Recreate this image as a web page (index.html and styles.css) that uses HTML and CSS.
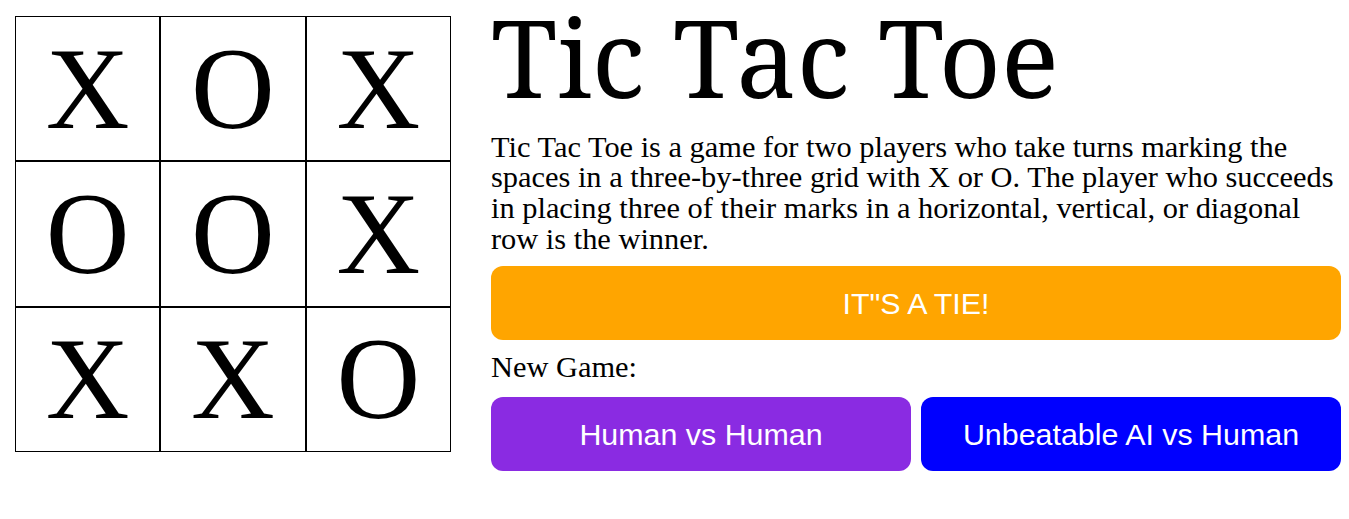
FILE: index.html
```html
<!DOCTYPE html>
<html>
<head>
<meta charset="utf-8">
<link rel="stylesheet" href="styles.css">
</head>
<body>
<div class="page">
  <div class="board">
    <div class="cell">X</div><div class="cell">O</div><div class="cell">X</div>
    <div class="cell">O</div><div class="cell">O</div><div class="cell">X</div>
    <div class="cell">X</div><div class="cell">X</div><div class="cell">O</div>
  </div>
  <div class="side">
    <h1 class="title">Tic Tac Toe</h1>
    <p class="desc">Tic Tac Toe is a game for two players who take turns marking the spaces in a three-by-three grid with X or O. The player who succeeds in placing three of their marks in a horizontal, vertical, or diagonal row is the winner.</p>
    <div class="status">IT"S A TIE!</div>
    <div class="label">New Game:</div>
    <div class="modes">
      <button class="mode hvh">Human vs Human</button>
      <button class="mode ai">Unbeatable AI vs Human</button>
    </div>
  </div>
</div>
</body>
</html>
```
FILE: styles.css
```css
body {
  margin: 8px;
  font-family: "Liberation Serif", serif;
}
.page {
  display: flex;
  gap: 40px;
  padding: 8px 0 0 7px;
}
.board {
  display: grid;
  grid-template-columns: repeat(3, 1fr);
  grid-template-rows: repeat(3, 1fr);
  width: 436px;
  height: 436px;
  flex: none;
}
.cell {
  box-sizing: border-box;
  border: 1px solid #000;
  display: flex;
  align-items: center;
  justify-content: center;
  font-family: "Liberation Serif", serif;
  font-size: 116px;
  line-height: 1;
}
.side {
  flex: 1;
  display: flex;
  flex-direction: column;
}
.title {
  margin: -13px 0 0;
  font-family: "Noto Serif", "DejaVu Serif", serif;
  font-weight: normal;
  font-size: 108px;
  line-height: 108px;
}
.desc {
  margin: 20.5px 0 11.7px;
  font-size: 30.4px;
  line-height: 30.7px;
}
.status {
  background: #ffa500;
  color: #fff;
  border-radius: 12px;
  height: 74px;
  display: flex;
  align-items: center;
  justify-content: center;
  font-family: "Liberation Sans", sans-serif;
  font-size: 30.4px;
}
.label {
  font-size: 30.4px;
  line-height: 34px;
  margin: 10px 0 13px;
}
.modes {
  display: flex;
  gap: 10px;
}
.mode {
  flex: 1;
  height: 74px;
  border: none;
  border-radius: 12px;
  color: #fff;
  font-family: "Liberation Sans", sans-serif;
  font-size: 30.4px;
}
.hvh { background: #8a2be2; }
.ai { background: #0000ff; }
```
